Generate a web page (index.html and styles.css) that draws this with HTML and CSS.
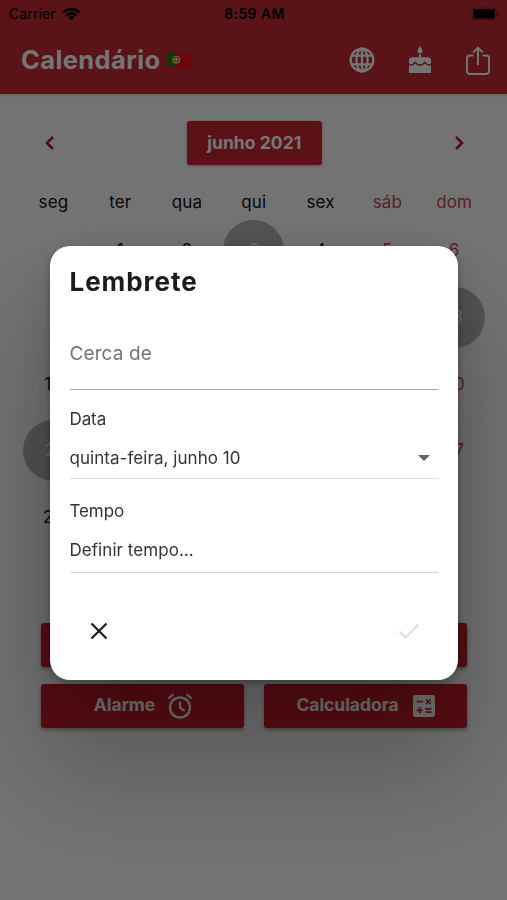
FILE: index.html
```html
<!DOCTYPE html>
<html lang="pt">
<head>
<meta charset="utf-8">
<title>Calendário</title>
<link rel="stylesheet" href="styles.css">
</head>
<body>
<div class="app">
  <header class="header">
    <div class="status">
      <div class="carrier"><span>Carrier</span>
        <svg width="19" height="14" viewBox="0 0 19 14"><path d="M.6 4.4a12.8 12.8 0 0 1 17.8 0L16.6 6.3a10.2 10.2 0 0 0-14.2 0zM3.6 7.4a8.5 8.5 0 0 1 11.8 0l-1.8 1.9a5.9 5.9 0 0 0-8.2 0zM6.5 10.3a4.3 4.3 0 0 1 6 0l-3 3.1z"/></svg>
      </div>
      <span class="clock">8:59 AM</span>
      <svg class="battery" width="29" height="14" viewBox="0 0 29 14"><rect x=".8" y=".8" width="24.6" height="12" rx="3.2" fill="none" stroke="#000" stroke-opacity=".25"/><rect x="2.2" y="2.2" width="21.8" height="9.2" rx="1.8"/><path d="M26.5 4.8q1.5.5 1.5 2t-1.5 2z" fill-opacity=".4"/></svg>
    </div>
    <div class="bar">
      <h1 class="title">Calendário</h1>
      <svg class="flag" width="26" height="18" viewBox="0 0 26 18"><path d="M1 2q5-2 10 0v14q-5-2-10 0z" fill="#187a18"/><path d="M10 1.7q7 2.400 15 .3v14q-8 2-15-.3z" fill="#e80c16"/><circle cx="10.3" cy="8.7" r="4" fill="#e8d54a"/><path d="M8.2 6.2h4.2v3.4q-2.1 3.2-4.2 0z" fill="#dd2028"/><path d="M9.2 7h2.2v2.4q-1.1 1.4-2.2 0z" fill="#fff"/></svg>
      <div class="actions">
        <svg width="26" height="26" viewBox="0 0 26 26" fill="none" stroke="#fff" stroke-width="2.3"><circle cx="13" cy="13" r="11.3"/><ellipse cx="13" cy="13" rx="5.6" ry="11.3"/><path d="M13 1.7v22.6M3 8.7h20M3 17.3h20"/></svg>
        <svg width="24" height="28" viewBox="0 0 24 28" fill="#fff"><path d="M12 0q2.500 3.600 2.500 5.100a2.500 2.500 0 0 1-5 0Q9.500 3.600 12 0zM11 8.500h2v2.700h6.500q3.500 0 3.500 3.500v2.600q-2.300 1.900-4.400-.3l-1.800-1.800-1.700 1.700q-3.100 2.800-6.200 0l-1.700-1.700L5.400 17Q3.300 19.200 1 17.300v-2.600q0-3.500 3.500-3.500H11zM1 19.200q3 1.200 5.500-1l.8-.7.8.7q4 3.100 7.900 0l.8-.7.800.7q2.500 2.200 5.400 1V27H1z"/></svg>
        <svg width="24" height="29" viewBox="0 0 24 29" fill="none" stroke="#fff" stroke-width="1.9" stroke-linejoin="round"><path d="M7.500 9.500H4a3 3 0 0 0-3 3V25a3 3 0 0 0 3 3h16a3 3 0 0 0 3-3V12.500a3 3 0 0 0-3-3h-3.500M12 19V2M7.200 6.500 12 1.700l4.800 4.800"/></svg>
      </div>
    </div>
  </header>
  <main class="calendar">
    <div class="month-nav">
      <svg width="12" height="16" viewBox="0 0 12 16"><path d="M9 2 3 8l6 6"/></svg>
      <button class="month">junho 2021</button>
      <svg width="12" height="16" viewBox="0 0 12 16"><path d="m3 2 6 6-6 6"/></svg>
    </div>
    <div class="week names"><span>seg</span><span>ter</span><span>qua</span><span>qui</span><span>sex</span><span>sáb</span><span>dom</span></div>
    <div class="week"><span></span><span>1</span><span>2</span><span><b class="marked">3</b></span><span>4</span><span>5</span><span>6</span></div>
    <div class="week"><span></span><span></span><span></span><span></span><span></span><span></span><span><b class="marked">13</b></span></div>
    <div class="week"><span>14</span><span></span><span></span><span></span><span></span><span></span><span>20</span></div>
    <div class="week"><span><b class="marked">21</b></span><span></span><span></span><span></span><span></span><span></span><span>27</span></div>
    <div class="week"><span>28</span><span></span><span></span><span></span><span></span><span></span><span></span></div>
  </main>
  <div class="tools">
    <div class="tool"></div>
    <div class="tool"></div>
    <div class="tool"><span>Alarme</span>
      <svg width="26" height="26" viewBox="0 0 26 26" fill="none" stroke="#fff" stroke-width="2.300"><circle cx="13" cy="14.500" r="10"/><path d="M13 8.500v6.300l4.700 3M1.300 5.600l5.200-4.400M24.700 5.600l-5.200-4.400"/></svg>
    </div>
    <div class="tool"><span>Calculadora</span>
      <svg width="26" height="26" viewBox="0 0 26 26"><rect x="2" y="2" width="22" height="22" rx="2.400" fill="#fff"/><path d="M5.600 8.700h6.200M15.100 6.500l4.500 4.500M19.600 6.500l-4.500 4.500M5.600 17.400h6.200M8.700 14.300v6.200M14.400 15.900h6.200M14.400 19.100h6.200" stroke="#c62833" stroke-width="1.700"/></svg>
    </div>
  </div>
</div>
<div class="overlay">
  <section class="dialog">
    <h2 class="dialog-title">Lembrete</h2>
    <div class="field about">Cerca de</div>
    <div class="label">Data</div>
    <div class="field date"><span>quinta-feira, junho 10</span><i class="caret"></i></div>
    <div class="label time-label">Tempo</div>
    <div class="field time">Definir tempo...</div>
    <div class="dialog-actions">
      <svg width="18" height="18" viewBox="0 0 18 18" fill="none" stroke="#1c1c1c" stroke-width="2.200"><path d="m1.500 1.500 15 15M16.500 1.500l-15 15"/></svg>
      <svg width="22" height="17" viewBox="0 0 22 17" fill="none" stroke="#dedede" stroke-width="2.200"><path d="m1.500 8.500 6 6L20.700 1.300"/></svg>
    </div>
  </section>
</div>
</body>
</html>
```
FILE: styles.css
```css
* { box-sizing: border-box; }
body {
  margin: 0;
  height: 900px;
  overflow: hidden;
  background: #fafafa;
  color: #111;
  font-family: Inter, "Liberation Sans", sans-serif;
}
h1, h2 { margin: 0; }
svg { display: block; flex: none; }
.app { height: 900px; }
.header {
  height: 94px;
  background: #c42b34;
  box-shadow: 0 1px 3px rgba(0, 0, 0, .2);
}
.status {
  display: grid;
  grid-template-columns: 1fr auto 1fr;
  align-items: center;
  height: 27px;
  padding: 0 7px 0 9px;
  font-size: 14px;
  color: #000;
}
.carrier { display: flex; align-items: center; gap: 6px; letter-spacing: .1px; }
.clock { font-size: 14px; font-weight: 600; letter-spacing: .4px; }
.battery { justify-self: end; }
.bar {
  display: flex;
  align-items: center;
  height: 66px;
  padding: 0 17.500px 0 21px;
}
.title { font-size: 25.500px; font-weight: 700; line-height: 30px; letter-spacing: .38px; color: #fff; }
.flag { margin-left: 6px; }
.actions { display: flex; align-items: center; gap: 33.500px; margin-left: auto; }
.calendar { padding: 26px 19.500px 0 20px; }
.month-nav {
  display: flex;
  align-items: center;
  justify-content: space-between;
  height: 45px;
  padding: 0 23px 0 24px;
}
.month-nav svg { fill: none; stroke: #c8102e; stroke-width: 2.600; }
.month {
  width: 135px;
  height: 44px;
  padding: 0;
  border: 0;
  border-radius: 3px;
  background: #c62833;
  box-shadow: 0 1px 3px rgba(0, 0, 0, .3);
  color: #fff;
  font: 700 17.500px Inter, "Liberation Sans", sans-serif;
  letter-spacing: .05px;
}
.week {
  display: grid;
  grid-template-columns: repeat(7, 1fr);
  height: 66.700px;
  font-size: 17px;
  letter-spacing: .1px;
}
.names { height: 52px; }
.week span { display: flex; align-items: center; justify-content: center; }
.names span { padding-top: 22px; }
.week span:nth-child(n+6) { color: #cc3d50; }
.week .marked {
  display: flex;
  align-items: center;
  justify-content: center;
  width: 61px;
  height: 61px;
  border-radius: 50%;
  background: #b4b4b4;
  color: #eee;
  font-weight: 400;
}
.tools {
  display: grid;
  grid-template-columns: 1fr 1fr;
  gap: 17px 20px;
  padding: 72.500px 40px 0 41px;
}
.tool {
  display: flex;
  align-items: center;
  justify-content: center;
  gap: 12px;
  height: 44px;
  padding-left: 2px;
  border-radius: 3px;
  background: #c41c29;
  box-shadow: 0 2px 4px rgba(0, 0, 0, .35);
  color: #fff;
  font-size: 17.500px;
  font-weight: 700;
  line-height: 22px;
  letter-spacing: -.05px;
}
.tool span { padding-bottom: 1px; }
.overlay {
  position: fixed;
  inset: 0;
  display: flex;
  justify-content: center;
  align-items: flex-start;
  padding-top: 246px;
  background: rgba(0, 0, 0, .54);
}
.dialog {
  width: 408px;
  height: 434px;
  margin-left: 1px;
  padding: 19px 20px 0 19.500px;
  border-radius: 20px;
  background: #fff;
  box-shadow: 0 3px 7px rgba(0, 0, 0, .28), 0 10px 40px rgba(0, 0, 0, .13), 0 80px 110px 15px rgba(0, 0, 0, .22);
  color: #333;
}
.dialog-title { font-size: 26px; font-weight: 700; line-height: 34px; letter-spacing: .95px; color: #1c1c1c; }
.field { letter-spacing: .05px; }
.about {
  height: 90.500px;
  padding-top: 41.500px;
  border-bottom: 1px solid #a5a5a5;
  font-size: 19px;
  line-height: 26px;
  letter-spacing: .1px;
  color: #757575;
}
.label { margin-top: 18px; font-size: 17px; line-height: 22px; letter-spacing: -.1px; }
.date {
  display: flex;
  justify-content: space-between;
  align-items: center;
  height: 49.500px;
  padding: 9px 8px 0 0;
  border-bottom: 1px solid #dedede;
  font-size: 17px;
}
.caret { border: 6px solid transparent; border-top-color: #616161; border-bottom: 0; }
.time-label { margin-top: 21px; }
.time { height: 51px; padding-top: 17px; border-bottom: 1px solid #d2d2d2; font-size: 17px; line-height: 22px; }
.dialog-actions { display: flex; justify-content: space-between; align-items: center; height: 18px; margin-top: 49px; padding: 0 18px 0 20px; }
```
